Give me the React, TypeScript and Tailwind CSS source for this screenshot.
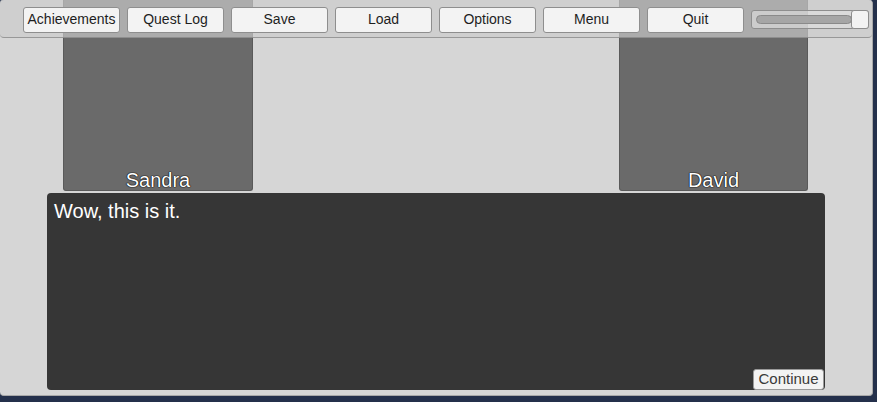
import React from "react";

const font = { fontFamily: '"Liberation Sans", Arial, sans-serif' };

function Btn({ label }: { label: string }) {
  return (
    <div className="w-[97px] h-[26px] flex items-center justify-center rounded-[3px] border border-[#8e8e8e] bg-[#f3f3f3] text-[14px] text-[#1e1e1e]">
      {label}
    </div>
  );
}

function Portrait({ name, w }: { name: string; w: string }) {
  return (
    <div
      className={`${w} h-[191px] bg-[#6a6a6a] border border-[#5a5a5a] border-t-0 rounded-b-[3px] flex items-end justify-center`}
    >
      <span
        className="text-[20px] leading-[20px] text-white"
        style={{ textShadow: "0 0 1px #000, 0 0 1px #000, 0 0 1px #000" }}
      >
        {name}
      </span>
    </div>
  );
}

export default function App() {
  const buttons = ["Achievements", "Quest Log", "Save", "Load", "Options", "Menu", "Quit"];
  return (
    <div className="w-[877px] h-[402px] bg-[#24304b] overflow-hidden" style={font}>
      <div className="relative mt-[1px] w-[873px] h-[396px] bg-[#d6d6d6] rounded-[4px] border-r border-b border-[#a8a8a8]">
        <div className="-mt-[1px] flex pl-[63px]">
          <Portrait name="Sandra" w="w-[190px]" />
          <div className="ml-[366px]">
            <Portrait name="David" w="w-[189px]" />
          </div>
        </div>
        <div className="ml-[47px] mt-[2px] w-[778px] h-[197px] bg-[#363636] rounded-[4px] flex flex-col">
          <div className="pl-[7px] pt-[7px] text-[20px] leading-[23px] text-white">Wow, this is it.</div>
          <div className="mt-auto self-end mr-[1px] h-[21px] w-[71px] flex items-center justify-center rounded-[3px] border border-[#9a9a9a] bg-[#f3f3f3] text-[15px] text-[#3a3a3a]">
            Continue
          </div>
        </div>
        <div className="absolute -top-[1px] left-0 w-[872px] h-[39px] rounded-[4px] bg-[rgba(204,204,204,0.68)] border-b border-[rgba(130,130,130,0.7)] flex items-center pl-[23px] gap-[7px] pt-[3px]">
          {buttons.map((b) => (
            <Btn key={b} label={b} />
          ))}
          <div className="w-[118px] h-[19px] rounded-[3px] border border-[#8e8e8e] bg-[rgba(225,225,225,0.6)] flex items-center pl-[4px] relative">
            <div className="w-[96px] h-[9px] rounded-full border border-[#8a8a8a] bg-[#a6a6a6]" />
            <div className="absolute right-[-1px] top-[-1px] w-[18px] h-[19px] rounded-[3px] border border-[#8e8e8e] bg-[#f3f3f3]" />
          </div>
        </div>
      </div>
    </div>
  );
}
